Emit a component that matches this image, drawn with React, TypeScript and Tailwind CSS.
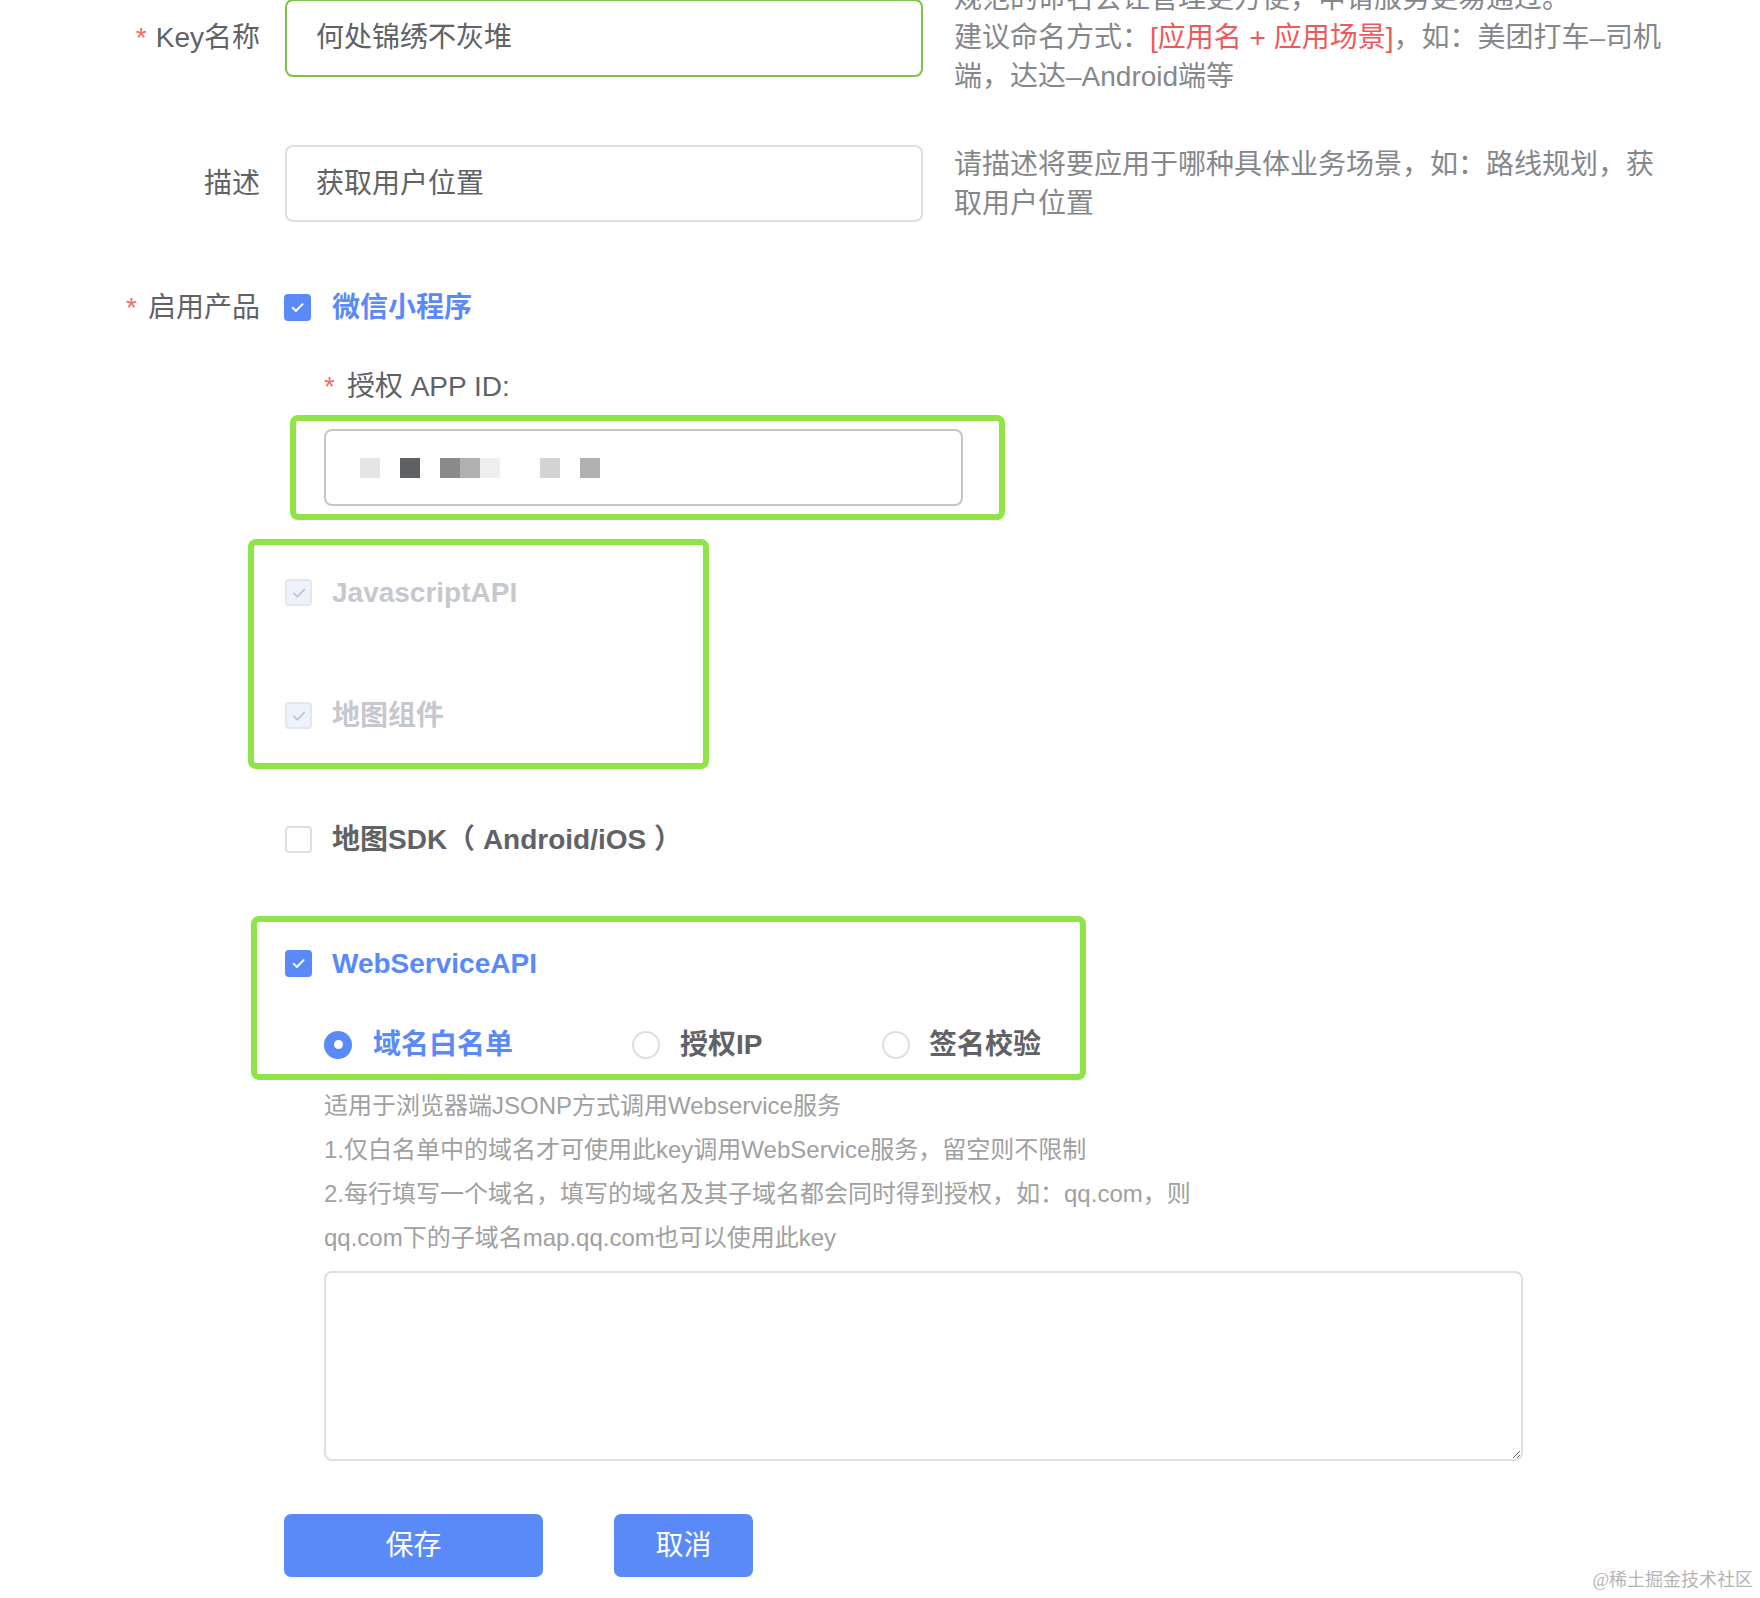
import React from "react";

const FONT = "font-['Liberation_Sans','Noto_Sans_CJK_SC',sans-serif]";

function Check({ state }: { state: "on" | "off" | "disabled" }) {
  if (state === "on") {
    return (
      <span className="flex h-[27px] w-[27px] shrink-0 items-center justify-center rounded-[4px] bg-[#5a8af8]">
        <svg width="17" height="17" viewBox="0 0 16 16">
          <path d="M3.5 8.2l3 3.1L12.8 4.8" stroke="#ffffff" strokeWidth="1.8" fill="none" strokeLinecap="round" strokeLinejoin="round" />
        </svg>
      </span>
    );
  }
  if (state === "disabled") {
    return (
      <span className="flex h-[27px] w-[27px] shrink-0 items-center justify-center rounded-[4px] border-2 border-[#e4e7ed] bg-[#edf2fc]">
        <svg width="18" height="18" viewBox="0 0 16 16">
          <path d="M3.5 8.2l3 3.1L12.8 4.8" stroke="#b8bcc4" strokeWidth="1.3" fill="none" strokeLinecap="round" strokeLinejoin="round" />
        </svg>
      </span>
    );
  }
  return <span className="h-[27px] w-[27px] shrink-0 rounded-[4px] border-2 border-[#dcdfe6] bg-white" />;
}

function Radio({ on }: { on: boolean }) {
  if (on) {
    return (
      <span className="flex h-[28px] w-[28px] shrink-0 items-center justify-center rounded-full bg-[#5a8af8]">
        <span className="h-[9px] w-[9px] rounded-full bg-white" />
      </span>
    );
  }
  return <span className="h-[28px] w-[28px] shrink-0 rounded-full border-2 border-[#dcdfe6] bg-white" />;
}

export default function App() {
  return (
    <div className={`relative h-[1598px] w-[1760px] overflow-hidden bg-white ${FONT}`}>
      <div className="-mt-[21px] flex flex-col">
        {/* Row 1: Key名称 */}
        <div className="flex items-start">
          <div className="mt-[20px] flex h-[78px] w-[260px] items-center justify-end text-[28px] text-[#606266]">
            <span className="mr-[9px] text-[#f56c6c]">*</span>Key名称
          </div>
          <div className="ml-[25px] mt-[20px] flex h-[78px] w-[638px] items-center rounded-[8px] border-2 border-[#7cc24b] pl-[29px] text-[28px] text-[#606266]">
            何处锦绣不灰堆
          </div>
          <div className="ml-[31px] whitespace-nowrap text-[28px] leading-[39px] text-[#85878b]">
            规范的命名会让管理更方便，申请服务更易通过。
            <br />
            建议命名方式：<span className="text-[#ee5a5a]">[应用名 + 应用场景]</span>，如：美团打车–司机
            <br />
            端，达达–Android端等
          </div>
        </div>

        {/* Row 2: 描述 */}
        <div className="mt-[49px] flex items-start">
          <div className="flex h-[77px] w-[260px] items-center justify-end text-[28px] text-[#606266]">描述</div>
          <div className="ml-[25px] flex h-[77px] w-[638px] items-center rounded-[8px] border-2 border-[#dcdfe6] pl-[29px] text-[28px] text-[#606266]">
            获取用户位置
          </div>
          <div className="ml-[31px] whitespace-nowrap text-[28px] leading-[39px] text-[#85878b]">
            请描述将要应用于哪种具体业务场景，如：路线规划，获
            <br />
            取用户位置
          </div>
        </div>

        {/* Row 3: 启用产品 */}
        <div className="mt-[65px] flex h-[39px] items-center">
          <div className="flex w-[260px] items-center justify-end text-[28px] text-[#606266]">
            <span className="mr-[11px] text-[#f56c6c]">*</span>启用产品
          </div>
          <div className="ml-[24px] flex items-center gap-[21px]">
            <Check state="on" />
            <span className="text-[28px] font-semibold text-[#5a8af8]">微信小程序</span>
          </div>
        </div>

        {/* Row 4: 授权 APP ID */}
        <div className="ml-[324px] mt-[40px] flex h-[39px] items-center text-[28px] text-[#606266]">
          <span className="mr-[12px] text-[#f56c6c]">*</span>授权 APP ID:
        </div>

        {/* Green box 1 */}
        <div className="ml-[290px] mt-[9px] h-[105px] w-[715px] rounded-[8px] border-[6px] border-[#8fe548] pl-[28px] pt-[8px]">
          <div className="flex h-[77px] w-[639px] items-center rounded-[8px] border-2 border-[#c4c6cc] pl-[34px]">
            <span className="h-[20px] w-[20px] bg-[#e5e5e5]" />
            <span className="ml-[20px] h-[20px] w-[20px] bg-[#5f6063]" />
            <span className="ml-[20px] h-[20px] w-[20px] bg-[#8a8a8a]" />
            <span className="h-[20px] w-[20px] bg-[#b0b0b0]" />
            <span className="h-[20px] w-[20px] bg-[#eeeeee]" />
            <span className="ml-[40px] h-[20px] w-[20px] bg-[#d3d3d3]" />
            <span className="ml-[20px] h-[20px] w-[20px] bg-[#b0b0b0]" />
          </div>
        </div>

        {/* Green box 2 */}
        <div className="ml-[248px] mt-[19px] flex h-[230px] w-[461px] flex-col rounded-[8px] border-[6px] border-[#8fe548] pl-[31px] pt-[28px]">
          <div className="flex h-[39px] items-center gap-[20px]">
            <Check state="disabled" />
            <span className="text-[28px] font-semibold text-[#c5c8ce]">JavascriptAPI</span>
          </div>
          <div className="mt-[84px] flex h-[39px] items-center gap-[20px]">
            <Check state="disabled" />
            <span className="text-[28px] font-semibold text-[#c5c8ce]">地图组件</span>
          </div>
        </div>

        {/* 地图SDK */}
        <div className="ml-[285px] mt-[51px] flex h-[39px] items-center gap-[20px]">
          <Check state="off" />
          <span className="text-[28px] font-semibold text-[#606266]">地图SDK（ Android/iOS ）</span>
        </div>

        {/* Green box 3 */}
        <div className="ml-[251px] mt-[57px] flex h-[164px] w-[835px] flex-col rounded-[8px] border-[6px] border-[#8fe548] pl-[28px] pt-[22px]">
          <div className="flex h-[39px] items-center gap-[20px]">
            <Check state="on" />
            <span className="text-[28px] font-semibold text-[#5a8af8]">WebServiceAPI</span>
          </div>
          <div className="mt-[42px] flex h-[39px] items-center pl-[39px]">
            <div className="flex w-[308px] items-center gap-[21px]">
              <Radio on />
              <span className="text-[28px] font-semibold text-[#5a8af8]">域名白名单</span>
            </div>
            <div className="flex w-[250px] items-center gap-[20px]">
              <Radio on={false} />
              <span className="text-[28px] font-semibold text-[#606266]">授权IP</span>
            </div>
            <div className="flex items-center gap-[19px]">
              <Radio on={false} />
              <span className="text-[28px] font-semibold text-[#606266]">签名校验</span>
            </div>
          </div>
        </div>

        {/* Help text */}
        <div className="ml-[324px] mt-[4px] whitespace-nowrap text-[24px] leading-[44px] text-[#a0a0a0]">
          <div>适用于浏览器端JSONP方式调用Webservice服务</div>
          <div>1.仅白名单中的域名才可使用此key调用WebService服务，留空则不限制</div>
          <div>2.每行填写一个域名，填写的域名及其子域名都会同时得到授权，如：qq.com，则</div>
          <div>qq.com下的子域名map.qq.com也可以使用此key</div>
        </div>

        {/* Textarea */}
        <textarea
          className="ml-[324px] mt-[11px] h-[190px] w-[1199px] rounded-[8px] border-2 border-[#dcdfe6] bg-white outline-none"
          defaultValue=""
        />

        {/* Buttons */}
        <div className="ml-[284px] mt-[53px] flex gap-[71px]">
          <button className="flex h-[63px] w-[259px] items-center justify-center rounded-[7px] bg-[#5a8af8] text-[28px] text-white">
            保存
          </button>
          <button className="flex h-[63px] w-[139px] items-center justify-center rounded-[7px] bg-[#5a8af8] text-[28px] text-white">
            取消
          </button>
        </div>
      </div>

      {/* Watermark */}
      <div className="absolute bottom-[6px] right-[7px] font-['Liberation_Serif','Noto_Sans_CJK_SC',serif] text-[18px] leading-[24px] text-[#b4b4b4]">
        @稀土掘金技术社区
      </div>
    </div>
  );
}
